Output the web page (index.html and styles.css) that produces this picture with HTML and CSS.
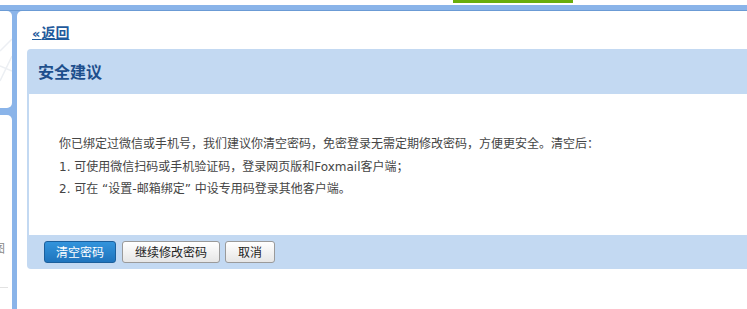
FILE: index.html
```html
<!DOCTYPE html>
<html lang="zh-CN">
<head>
<meta charset="utf-8">
<link rel="stylesheet" href="styles.css">
</head>
<body>
<div class="top">
  <div class="tab"></div>
</div>
<div class="band"></div>
<div class="frame">
  <div class="side">
    <div class="side-box side-box-top">
      <svg class="deco" width="12" height="97" viewBox="0 0 12 97"><path d="M0 40 L12 28 M0 70 L12 45 M0 55 L12 60" stroke="#eceff3" stroke-width="1.5" fill="none"/></svg>
    </div>
    <div class="side-box side-box-bottom">
      <span class="side-label">图</span>
      <div class="side-rule"></div>
    </div>
  </div>
  <div class="main">
    <div class="back-row"><a class="back" href="#"><span class="back-arrows">&laquo;</span>返回</a></div>
    <div class="panel">
      <div class="panel-head">安全建议</div>
      <div class="panel-body">
        <p>你已绑定过微信或手机号，我们建议你清空密码，免密登录无需定期修改密码，方便更安全。清空后：</p>
        <p>1. 可使用微信扫码或手机验证码，登录网页版和Foxmail客户端；</p>
        <p>2. 可在 “设置-邮箱绑定” 中设专用码登录其他客户端。</p>
      </div>
      <div class="panel-foot">
        <button class="btn btn-primary">清空密码</button>
        <button class="btn">继续修改密码</button>
        <button class="btn">取消</button>
      </div>
    </div>
  </div>
</div>
</body>
</html>
```
FILE: styles.css
```css
html, body {
  margin: 0;
  padding: 0;
  height: 100%;
  overflow: hidden;
  background: #ffffff;
  font-family: "DejaVu Sans", "Noto Sans CJK SC", sans-serif;
  font-size: 12px;
}
.top {
  height: 5px;
  position: relative;
  background: #ffffff;
}
.tab {
  position: absolute;
  left: 453px;
  top: 0;
  width: 120px;
  height: 3px;
  background: #69ad0b;
}
.band {
  height: 5px;
  background: #8ab4e9;
  border-bottom: 1px solid #6b9bd5;
}
.frame {
  display: flex;
  height: 298px;
  background: #8ab4e9;
}
.side {
  width: 12px;
  display: flex;
  flex-direction: column;
  gap: 7px;
  margin-right: 5px;
}
.side-box {
  background: #ffffff;
  overflow: hidden;
}
.side-box-top {
  height: 97px;
  border-radius: 0 5px 5px 0;
}
.deco {
  display: block;
}
.side-box-bottom {
  flex: 1;
  border-radius: 0 5px 0 0;
  padding-top: 126px;
}
.side-label {
  display: block;
  margin-left: -7px;
  font-family: "Noto Sans CJK SC", sans-serif;
  font-size: 12px;
  line-height: 14px;
  color: #8a8a8a;
}
.side-rule {
  margin-top: 32px;
  width: 8px;
  height: 1px;
  background: #e2e2e2;
}
.main {
  flex: 1;
  background: #ffffff;
  border-top-left-radius: 5px;
  overflow: hidden;
  padding: 13px 0 0 10px;
  min-width: 0;
}
.back-row {
  height: 17px;
  padding-left: 5px;
}
.back {
  font-family: "Noto Sans CJK SC", sans-serif;
  font-size: 14px;
  line-height: 17px;
  font-weight: bold;
  color: #1f5a9c;
  text-decoration: underline;
}
.back-arrows {
  font-family: "DejaVu Sans", sans-serif;
  font-size: 13px;
  letter-spacing: 1px;
}
.panel {
  margin-top: 8px;
  margin-right: -20px;
  background: #c3d9f2;
  border-radius: 4px 0 0 4px;
  padding: 0 0 0 2px;
}
.panel-head {
  height: 45px;
  line-height: 45px;
  padding-left: 9px;
  font-family: "Noto Sans CJK SC", sans-serif;
  font-size: 16px;
  font-weight: bold;
  color: #1e4f8c;
}
.panel-body {
  background: #ffffff;
  padding: 39px 0 25px 30px;
  color: #454545;
  height: 77px;
}
.panel-body p {
  margin: 0;
  line-height: 22.5px;
}
.panel-foot {
  display: flex;
  gap: 5px;
  padding: 6px 0 6px 15px;
  height: 22px;
}
.btn {
  height: 22px;
  padding: 0 12px;
  font-family: "Noto Sans CJK SC", sans-serif;
  font-size: 12px;
  line-height: 20px;
  color: #222222;
  border: 1px solid #9a9a9a;
  border-radius: 3px;
  background: linear-gradient(#ffffff, #e6e6e6);
  cursor: pointer;
}
.btn-primary {
  padding: 0 11px;
  margin-right: 1px;
  color: #ffffff;
  border-color: #1b5f9c;
  background: linear-gradient(#3394dc, #1f74bd);
}
```
